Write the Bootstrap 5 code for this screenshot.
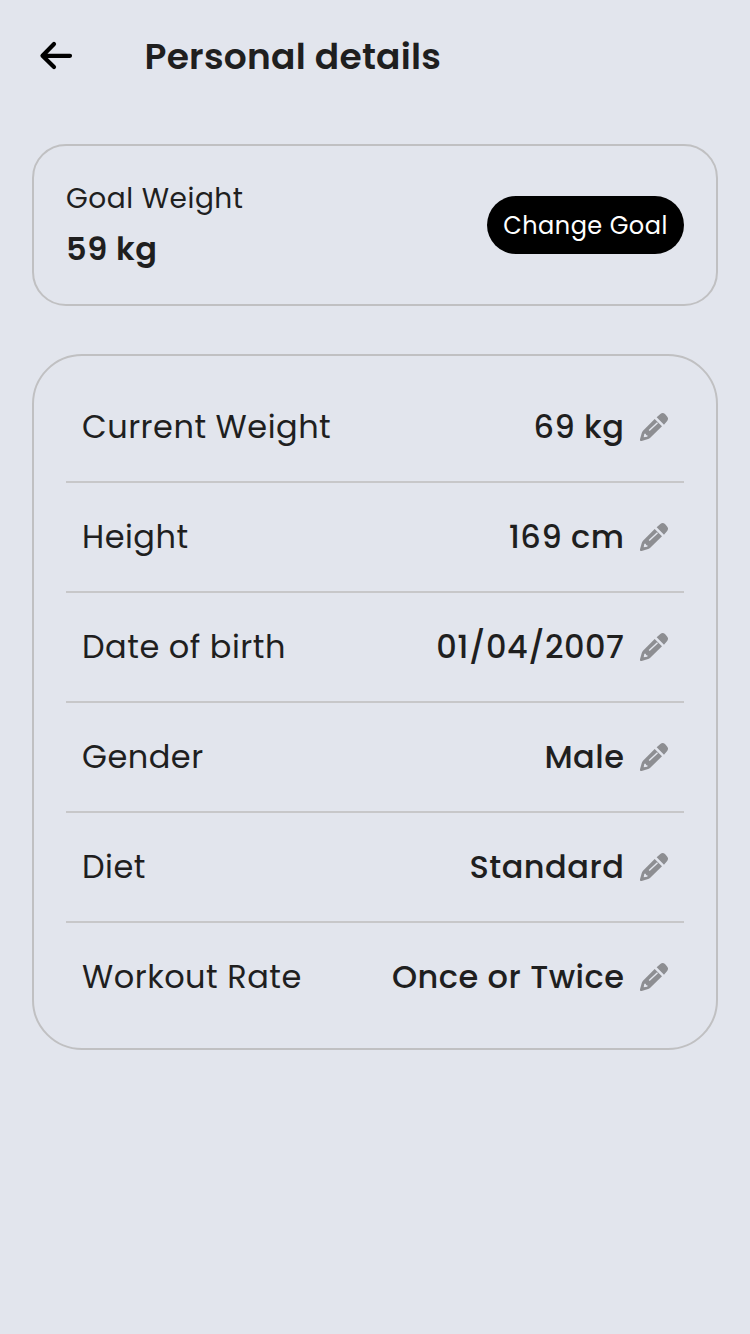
<!DOCTYPE html>
<html lang="en">
<head>
<meta charset="utf-8">
<meta name="viewport" content="width=device-width, initial-scale=1">
<title>Personal details</title>
<link href="https://cdn.jsdelivr.net/npm/bootstrap@5.3.0/dist/css/bootstrap.min.css" rel="stylesheet">
<style>
body{background:#e2e5ed;color:#1f1f1f;font-family:Poppins,Inter,sans-serif;min-height:1334px}
.topbar{height:112px;padding:0 38px}
.topbar h1{font-size:36px;font-weight:600;line-height:48px;margin-left:70.500px;letter-spacing:.25px;padding-top:2px}
.panel{border:2px solid #c0c0c2;margin:0 32px;padding:0 32px}
.goal{height:162px;border-radius:34px;margin-top:32px}
.goal-text{padding-bottom:3px}
.goal-label{font-size:28px;font-weight:400;line-height:50px;letter-spacing:.54px}
.goal-value{font-size:32px;font-weight:600;line-height:50px;letter-spacing:.6px}
.goal .btn{width:197px;height:58px;font-size:24px;line-height:59px;letter-spacing:.5px}
.details{border-radius:50px;margin-top:48px;padding-top:17px;padding-bottom:17px}
.detail{height:110px;border-bottom:2px solid #c7c7c9;padding:0 16px;font-size:32px;line-height:48px;letter-spacing:.5px}
.detail:last-child{height:108px;border:0}
.detail dt{font-weight:400}
.detail dd{font-weight:500}
.detail svg{margin-left:15.500px}
</style>
</head>
<body>
<svg class="d-none"><symbol id="pencil" viewBox="0 0 84 84"><path fill-rule="evenodd" d="M44 18 66 40 30 75Q27 78 22 79L5 84Q-1 85 0 79L5 61Q6 56 9 53ZM13 62 11 73 22 71 23 67Q18 68 17 62ZM26 51 29 54 54 31 51 28Z"/><path d="M50 13 61 3Q68-3 75 3L80 9Q87 16 82 23L72 35Z"/></symbol></svg>
<header class="topbar d-flex align-items-center">
<svg width="36" height="36" viewBox="0 0 36 36" fill="none" stroke="#000" stroke-width="4.200" stroke-linecap="round" stroke-linejoin="round"><path d="M16 6 4.500 17.800 16 29M4.500 17.800H32"/></svg>
<h1 class="mb-0">Personal details</h1>
</header>
<main>
<section class="panel goal d-flex align-items-center justify-content-between">
<div class="goal-text"><div class="goal-label">Goal Weight</div><div class="goal-value">59 kg</div></div>
<button class="btn btn-dark rounded-pill bg-black border-0 p-0 text-white">Change Goal</button>
</section>
<dl class="panel details mb-0">
<div class="detail d-flex align-items-center justify-content-between"><dt>Current Weight</dt><dd class="mb-0 d-flex align-items-center">69 kg<svg width="28" height="28" fill="#8d8e92"><use href="#pencil"/></svg></dd></div>
<div class="detail d-flex align-items-center justify-content-between"><dt>Height</dt><dd class="mb-0 d-flex align-items-center">169 cm<svg width="28" height="28" fill="#8d8e92"><use href="#pencil"/></svg></dd></div>
<div class="detail d-flex align-items-center justify-content-between"><dt>Date of birth</dt><dd class="mb-0 d-flex align-items-center">01/04/2007<svg width="28" height="28" fill="#8d8e92"><use href="#pencil"/></svg></dd></div>
<div class="detail d-flex align-items-center justify-content-between"><dt>Gender</dt><dd class="mb-0 d-flex align-items-center">Male<svg width="28" height="28" fill="#8d8e92"><use href="#pencil"/></svg></dd></div>
<div class="detail d-flex align-items-center justify-content-between"><dt>Diet</dt><dd class="mb-0 d-flex align-items-center">Standard<svg width="28" height="28" fill="#8d8e92"><use href="#pencil"/></svg></dd></div>
<div class="detail d-flex align-items-center justify-content-between"><dt>Workout Rate</dt><dd class="mb-0 d-flex align-items-center">Once or Twice<svg width="28" height="28" fill="#8d8e92"><use href="#pencil"/></svg></dd></div>
</dl>
</main>
<script src="https://cdn.jsdelivr.net/npm/bootstrap@5.3.0/dist/js/bootstrap.bundle.min.js"></script>
</body>
</html>
